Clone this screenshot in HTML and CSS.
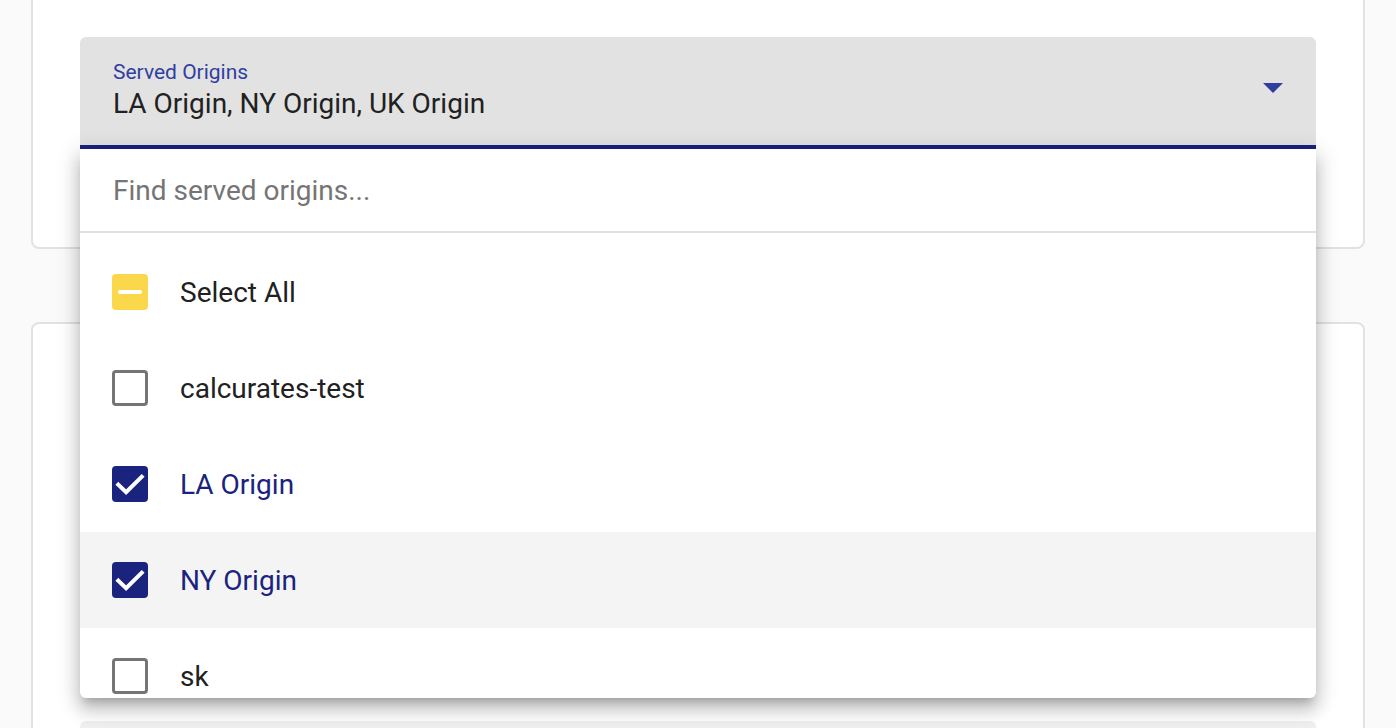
FILE: index.html
```html
<!DOCTYPE html>
<html>
<head>
	<meta http-equiv="Content-Type" content="text/html;charset=UTF-8">
	<title>Served Origins</title>
	<link rel="stylesheet" href="styles.css">
</head>
<body>
	<div class="page">
		<div class="card card-top">
			<div class="select">
				<div class="field">
					<div class="field-text">
						<div class="label">Served Origins</div>
						<div class="value">LA Origin, NY Origin, UK Origin</div>
					</div>
					<span class="arrow"></span>
				</div>

				<!-- open dropdown panel -->
				<div class="panel">
					<div class="search">
						<input type="text" placeholder="Find served origins..." />
					</div>
					<ul class="options">
						<li class="option">
							<span class="box box-partial"><span class="dash"></span></span>
							<span class="text">Select All</span>
						</li>
						<li class="option">
							<span class="box"></span>
							<span class="text">calcurates-test</span>
						</li>
						<li class="option selected">
							<span class="box box-checked">
								<svg viewBox="0 0 24 24" width="36" height="36"><polyline points="4.2,12.4 9.4,17.4 19.8,7.2" fill="none" stroke="#fff" stroke-width="2.7" stroke-linecap="square"/></svg>
							</span>
							<span class="text">LA Origin</span>
						</li>
						<li class="option selected active">
							<span class="box box-checked">
								<svg viewBox="0 0 24 24" width="36" height="36"><polyline points="4.2,12.4 9.4,17.4 19.8,7.2" fill="none" stroke="#fff" stroke-width="2.7" stroke-linecap="square"/></svg>
							</span>
							<span class="text">NY Origin</span>
						</li>
						<li class="option">
							<span class="box"></span>
							<span class="text">sk</span>
						</li>
					</ul>
				</div>
			</div>
		</div>

		<div class="card card-bottom">
			<div class="card-body"></div>
			<div class="field field-plain"></div>
		</div>
	</div>
</body>
</html>
```

FILE: styles.css
```css
*{ margin: 0; padding: 0; box-sizing: border-box; }
html, body{ height: 100%; overflow: hidden; }
body{ background: #fafafa; font-family: Roboto, "Liberation Sans", Arial, sans-serif; color: #212121; }

.page{ padding: 0 31px; }

.card{ background: #fff; border: 2px solid #e2e2e2; border-radius: 8px; padding: 0 47px; }
.card-top{ margin-top: -20px; padding-top: 55px; padding-bottom: 98px; }
.card-bottom{ margin-top: 73px; padding-top: 0; }
.card-body{ height: 397px; }

.select{ position: relative; }

.field{ display: flex; align-items: center; height: 112px; background: #e2e2e2; border-radius: 6px 6px 0 0; border-bottom: 4px solid #1a237e; padding: 0 33px; }
.field-text{ flex: 1; margin-top: -3px; }
.label{ font-size: 21px; line-height: 24px; color: #303f9f; }
.value{ font-size: 28px; line-height: 32px; margin-top: 4px; color: #212121; }
.arrow{ width: 0; height: 0; border-left: 10px solid transparent; border-right: 10px solid transparent; border-top: 10px solid #303f9f; margin-top: -6px; }

.field-plain{ background: #efefef; border-bottom: none; height: 112px; }

/* dropdown */
.panel{ position: absolute; top: 100%; left: 0; right: 0; height: 549px; overflow: hidden; background: #fff; border-radius: 0 0 6px 6px;
	box-shadow: 0 8px 8px -5px rgba(0,0,0,.2), 0 12px 16px 2px rgba(0,0,0,.14), 0 5px 22px 4px rgba(0,0,0,.12); }

.search{ height: 84px; border-bottom: 2px solid #e0e0e0; display: flex; align-items: center; padding: 0 33px; }
.search input{ width: 100%; border: none; outline: none; background: transparent; font-family: inherit; font-size: 28px; color: #212121; }
.search input::placeholder{ color: #757575; }

.options{ list-style: none; padding-top: 11px; }
.option{ display: flex; align-items: center; height: 96px; padding: 0 32px; font-size: 28px; color: #212121; }
.option.selected{ color: #1a237e; }
.option.active{ background: #f4f4f4; }
.text{ margin-left: 32px; }

.box{ width: 36px; height: 36px; border: 3px solid #757575; border-radius: 4px; display: flex; align-items: center; justify-content: center; flex-shrink: 0; }
.box-partial{ background: #fbd84b; border-color: #fbd84b; }
.dash{ width: 24px; height: 4px; background: #fff; border-radius: 2px; }
.box-checked{ background: #1a237e; border: none; }
.box-checked svg{ display: block; }
```
